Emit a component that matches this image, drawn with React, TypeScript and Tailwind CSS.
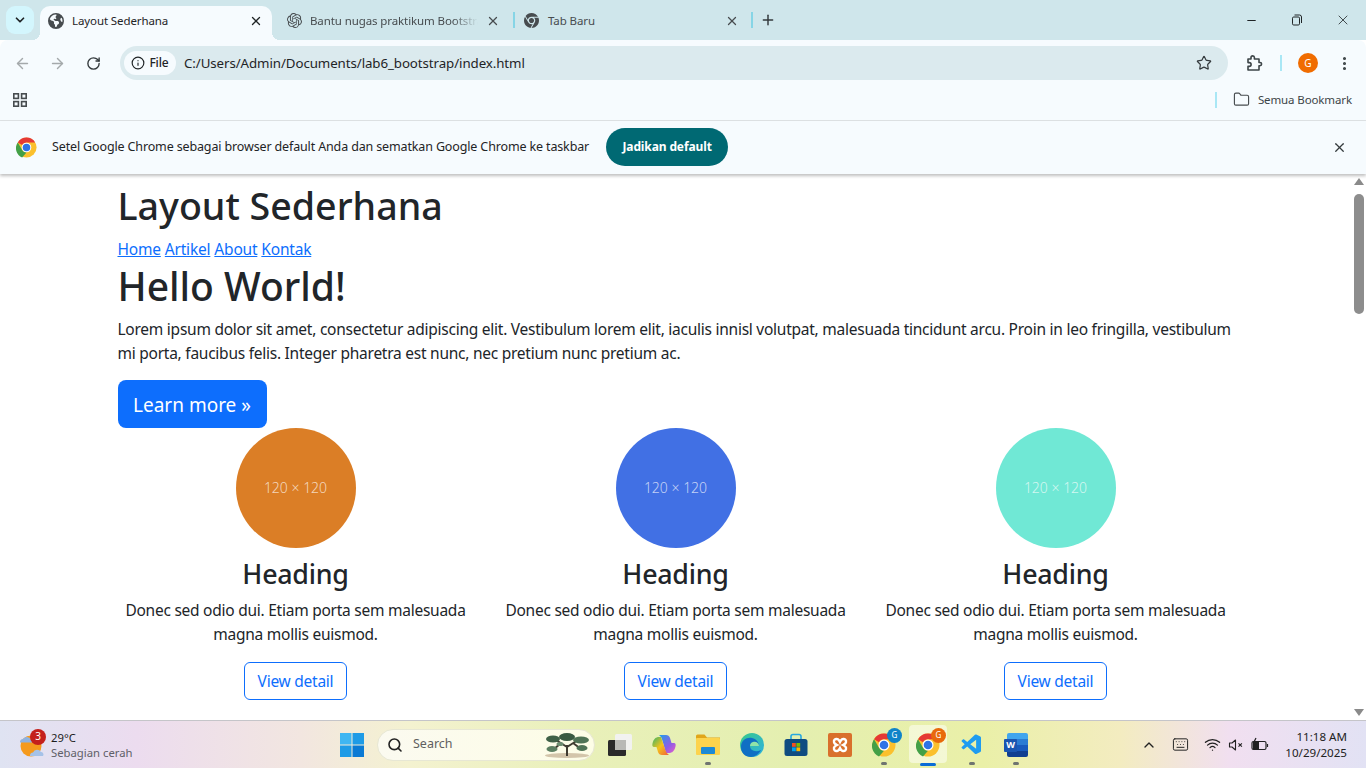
import { ArrowLeft, ArrowRight, ChevronDown, ChevronUp, Folder, Info, Keyboard, Minus, MoreVertical, Plus, RotateCw, Search, Star, Wifi, X } from "lucide-react";
import { FaChrome, FaEarthAmericas } from "react-icons/fa6";
import { SiOpenai } from "react-icons/si";
import { VscVscode } from "react-icons/vsc";

const links = ["Home", "Artikel", "About", "Kontak"];
const thumbs = ["bg-[#db7e26]", "bg-[#4170e4]", "bg-[#70e8d5]"];

function ChromeLogo({ size = 22 }: { size?: number }) {
    return (
        <svg width={size} height={size} viewBox="0 0 48 48">
            <circle cx="24" cy="24" r="23" fill="#fbc02d" />
            <path d="M24 1a23 23 0 0 1 19.9 11.5H24a11.5 11.5 0 0 0-10 5.8L4.1 12.5A23 23 0 0 1 24 1z" fill="#e53935" />
            <path d="M4.1 12.5 14 29.7a11.5 11.5 0 0 0 10 5.8L14 47A23 23 0 0 1 4.1 12.5z" fill="#43a047" />
            <circle cx="24" cy="24" r="11" fill="#fff" />
            <circle cx="24" cy="24" r="8.6" fill="#2f73e6" />
        </svg>
    );
}

function Card({ color }: { color: string }) {
    return (
        <div className="w-[380px] px-[12px] flex flex-col items-center text-center">
            <div className={`w-[120px] h-[120px] rounded-full ${color} flex items-center justify-center text-[14px] tracking-normal text-white/70 font-light`}>120 × 120</div>
            <h2 className="text-[26.8px] leading-[34px] font-medium mt-[9px] text-[#212529]">Heading</h2>
            <p className="leading-[24px] mt-[7px] w-full">Donec sed odio dui. Etiam porta sem malesuada magna mollis euismod.</p>
            <button className="mt-[16px] h-[38px] w-[103px] rounded-[6px] border border-[#0d6efd] text-[#0d6efd] text-[15.5px]">View detail</button>
        </div>
    );
}

function TaskIcon({ children, active, dot }: { children: React.ReactNode; active?: boolean; dot?: boolean }) {
    return (
        <div className="relative w-[44px] h-[47px] flex items-center justify-center">
            {active && <div className="absolute left-[3px] top-[4px] w-[38px] h-[38px] rounded-[4px] bg-white/50" />}
            <div className="relative">{children}</div>
            {dot && <div className="absolute bottom-[3px] left-[19px] w-[6px] h-[3px] rounded-full bg-[#6f7470]" />}
            {active && <div className="absolute bottom-[2px] left-[14px] w-[16px] h-[3px] rounded-full bg-[#0a6cd6]" />}
        </div>
    );
}

function ChromeBadge({ color }: { color: string }) {
    return (
        <div className="relative w-[24px] h-[24px]">
            <ChromeLogo size={24} />
            <div className={`absolute -top-[5px] -right-[6px] w-[15px] h-[15px] rounded-full ${color} text-white text-[8px] flex items-center justify-center`}>G</div>
        </div>
    );
}

export default function App() {
    return (
        <div className="w-[1366px] h-[768px] overflow-hidden flex flex-col bg-white font-['Noto_Sans',sans-serif] text-[#212529]">
            {/* tab strip */}
            <div className="h-[40px] bg-[#cfe6eb] flex items-end relative">
                <div className="absolute left-[6px] top-[6px] w-[28px] h-[28px] rounded-[9px] bg-[#d3f6fd] flex items-center justify-center">
                    <ChevronDown size={14} strokeWidth={3} className="text-[#1f2426]" />
                </div>
                <div className="ml-[40px] flex items-center h-[34px]">
                    <div className="relative h-[34px] w-[232px] bg-[#f6fbfe] rounded-t-[10px] flex items-center gap-[8px] pl-[8px] pr-[9px] pb-[5px] text-[#1f2426]">
                        <div className="absolute -left-[8px] bottom-0 w-[8px] h-[8px] bg-[radial-gradient(circle_at_0_0,transparent_8px,#f6fbfe_8px)]" />
                        <div className="absolute -right-[8px] bottom-0 w-[8px] h-[8px] bg-[radial-gradient(circle_at_100%_0,transparent_8px,#f6fbfe_8px)]" />
                        <FaEarthAmericas size={16} className="text-[#474c4f]" />
                        <span className="flex-1 text-[11.5px] tracking-[-0.1px] whitespace-nowrap">Layout Sederhana</span>
                        <X size={14} strokeWidth={2.2} />
                    </div>
                    <div className="w-[241px] h-[34px] flex items-center gap-[8px] pl-[15px] pr-[13px] pb-[5px] text-[#474c4f]">
                        <SiOpenai size={15} />
                        <span className="flex-1 text-[11.5px] tracking-[-0.1px] whitespace-nowrap overflow-hidden [mask-image:linear-gradient(to_right,black_85%,transparent)]">Bantu nugas praktikum Bootstrap</span>
                        <X size={14} strokeWidth={2.2} />
                    </div>
                    <div className="w-[2px] h-[16px] -mt-[6px] bg-[#86d5e6]" />
                    <div className="w-[236px] h-[34px] flex items-center gap-[9px] pl-[9px] pr-[12px] pb-[5px] text-[#474c4f]">
                        <FaChrome size={15} />
                        <span className="flex-1 text-[11.5px] tracking-[-0.1px] whitespace-nowrap">Tab Baru</span>
                        <X size={14} strokeWidth={2.2} />
                    </div>
                    <div className="w-[2px] h-[16px] -mt-[6px] bg-[#86d5e6]" />
                    <Plus size={16} strokeWidth={2.2} className="ml-[7px] -mt-[6px] text-[#343a3d]" />
                </div>
                <div className="ml-auto h-[40px] flex items-center text-[#1f2426]">
                    <div className="w-[46px] flex justify-center"><Minus size={13} /></div>
                    <div className="w-[46px] flex justify-center">
                        <svg width="12" height="12" viewBox="0 0 12 12" fill="none" stroke="currentColor"><rect x="1.5" y="3" width="7" height="8" rx="1.2" /><path d="M3.5 1h5a2 2 0 0 1 2 2v6" /></svg>
                    </div>
                    <div className="w-[46px] flex justify-center"><X size={16} strokeWidth={1.2} /></div>
                </div>
            </div>

            {/* toolbar */}
            <div className="h-[40px] pt-[6px] bg-[#f6fbfe] rounded-tr-[8px] rounded-tl-[8px] flex items-center text-[#474c4f]">
                <ArrowLeft size={17} className="ml-[14px] text-[#a4a9ab]" />
                <ArrowRight size={17} className="ml-[18px] text-[#a4a9ab]" />
                <RotateCw size={15} strokeWidth={2.2} className="ml-[20px] text-[#343a3d]" />
                <div className="ml-[19px] w-[1108px] h-[34px] rounded-full bg-[#dbeaee] flex items-center pl-[4px] pr-[16px]">
                    <div className="h-[24px] w-[52px] rounded-full bg-[#f6fbfe] flex items-center justify-center gap-[4px] text-[#1f2426]">
                        <Info size={14} />
                        <span className="text-[12px] font-medium tracking-[-0.01em]">File</span>
                    </div>
                    <span className="ml-[8px] mt-[1px] text-[13.3px] tracking-[-0.08px] text-[#1f2426]">C:/Users/Admin/Documents/lab6_bootstrap/index.html</span>
                    <Star size={16} strokeWidth={1.8} className="ml-auto text-[#343a3d]" />
                </div>
                <svg width="18" height="18" viewBox="0 0 18 18" fill="none" stroke="#3d4548" strokeWidth="1.6" className="ml-[17px]">
                    <path d="M3 5h3V3.6a1.7 1.7 0 0 1 3.4 0V5H14v3.5h1a1.6 1.6 0 0 1 0 3.2h-1V16H3v-3.6h1.2a1.9 1.9 0 0 0 0-3.8H3z" strokeLinejoin="round" />
                </svg>
                <div className="ml-[17px] w-[2px] h-[16px] bg-[#a9e7f5]" />
                <div className="ml-[16px] w-[20px] h-[20px] rounded-full bg-[#f06c00] text-white text-[10px] flex items-center justify-center">G</div>
                <MoreVertical size={17} strokeWidth={2.4} className="ml-[18px] text-[#3d4548]" />
            </div>

            {/* bookmark bar */}
            <div className="h-[41px] bg-[#f6fbfe] border-b border-[#dfe3e5] flex items-center pb-[1px]">
                <svg width="14" height="14" viewBox="0 0 14 14" fill="none" stroke="#474c4f" strokeWidth="1.6" className="ml-[13px]">
                    <rect x="0.8" y="0.8" width="4.6" height="4.6" /><rect x="8.6" y="0.8" width="4.6" height="4.6" /><rect x="0.8" y="8.6" width="4.6" height="4.6" /><rect x="8.6" y="8.6" width="4.6" height="4.6" />
                </svg>
                <div className="ml-auto w-[2px] h-[16px] bg-[#a9e7f5]" />
                <Folder size={17} strokeWidth={1.6} className="ml-[16px] text-[#474c4f]" />
                <span className="ml-[8px] mr-[14px] text-[11.5px] tracking-[-0.01em] text-[#3d4548]">Semua Bookmark</span>
            </div>

            {/* default browser bar */}
            <div className="h-[53px] pb-[1px] bg-[#f6fbfe] shadow-[0_2px_3px_rgba(0,0,0,0.25)] relative z-10 flex items-center">
                <div className="ml-[16px]"><ChromeLogo size={21} /></div>
                <span className="ml-[15px] mt-[1px] text-[12.5px] tracking-[-0.14px] text-[#1f2426]">Setel Google Chrome sebagai browser default Anda dan sematkan Google Chrome ke taskbar</span>
                <button className="ml-[17px] h-[38px] w-[122px] rounded-full bg-[#006973] text-white text-[12px] font-bold tracking-[-0.01em]">Jadikan default</button>
                <X size={15} strokeWidth={2} className="ml-auto mr-[19px] text-[#343a3d]" />
            </div>

            {/* page */}
            <div className="flex-1 flex min-h-0">
                <div className="flex-1 overflow-hidden">
                    <div className="w-[1140px] mx-auto px-[12px] text-[15.5px] tracking-[-0.25px] leading-[24px]">
                        <h1 className="text-[37.6px] tracking-normal leading-[48px] font-medium mt-[8px]">Layout Sederhana</h1>
                        <nav className="flex gap-[4px] mt-[7px] tracking-[-0.2px]">
                            {links.map((l) => (
                                <a key={l} href="#" className="text-[#0d6efd] underline">{l}</a>
                            ))}
                        </nav>
                        <h1 className="text-[39px] tracking-normal leading-[48px] font-medium mt-[1px]">Hello World!</h1>
                        <p className="mt-[7px]">Lorem ipsum dolor sit amet, consectetur adipiscing elit. Vestibulum lorem elit, iaculis innisl volutpat, malesuada tincidunt arcu. Proin in leo fringilla, vestibulum mi porta, faucibus felis. Integer pharetra est nunc, nec pretium nunc pretium ac.</p>
                        <button className="mt-[15px] h-[48px] w-[149px] pt-[2px] rounded-[8px] bg-[#0d6efd] text-white text-[19px] tracking-normal block">Learn more »</button>
                        <div className="flex -mx-[12px]">
                            {thumbs.map((c) => (
                                <Card key={c} color={c} />
                            ))}
                        </div>
                    </div>
                </div>
                <div className="w-[15px] bg-white flex flex-col items-center">
                    <div className="w-0 h-0 mt-[4px] border-x-[5px] border-x-transparent border-b-[7px] border-b-[#8a8a8a]" />
                    <div className="w-[10px] h-[120px] mt-[9px] rounded-full bg-[#8d8d8d]" />
                    <div className="w-0 h-0 mt-auto mb-[4px] border-x-[5px] border-x-transparent border-t-[7px] border-t-[#8a8a8a]" />
                </div>
            </div>

            {/* taskbar */}
            <div className="h-[48px] border-t border-[#c5c5c9] bg-[linear-gradient(90deg,#dfe3f2_0%,#ecdcef_10%,#f2e6e0_22%,#f4f2d0_30%,#e9f0ba_42%,#e4efb0_58%,#eaf0a8_72%,#f3ecc0_82%,#f1dff0_90%,#e2e2f4_100%)] flex items-center">
                <div className="w-[330px] shrink-0 flex items-center pl-[19px]">
                    <div className="relative w-[26px] h-[26px]">
                        <svg width="26" height="26" viewBox="0 0 26 26">
                            <circle cx="12" cy="14" r="10.500" fill="#f59a1d" />
                            <path d="M1 10.500a3 3 0 0 1 3-3.500 4.500 4.500 0 0 1 8 1 2.500 2.500 0 0 1 1 2.500z" fill="#8fb2e0" />
                            <path d="M11 24a3 3 0 0 1 3-3.500 4.500 4.500 0 0 1 8-.5 2.500 2.500 0 0 1 2 4z" fill="#a5c2e8" />
                        </svg>
                        <div className="absolute -top-[3px] left-[11px] w-[16px] h-[16px] rounded-full bg-[#c4201c] text-white text-[10px] flex items-center justify-center">3</div>
                    </div>
                    <div className="ml-[6px] leading-[15px]">
                        <div className="text-[11.3px] text-[#1c1c1c]">29°C</div>
                        <div className="text-[11.3px] text-[#5f5f68]">Sebagian cerah</div>
                    </div>
                </div>
                <div className="w-[44px] flex justify-center">
                    <svg width="24" height="24" viewBox="0 0 24 24">
                        <rect x="0" y="0" width="11.5" height="11.5" fill="#3fb6f2" />
                        <rect x="12.5" y="0" width="11.5" height="11.5" fill="#1e9be6" />
                        <rect x="0" y="12.5" width="11.5" height="11.5" fill="#1e9be6" />
                        <rect x="12.5" y="12.5" width="11.5" height="11.5" fill="#0a7ad4" />
                    </svg>
                </div>
                <div className="ml-[3px] w-[218px] h-[32px] rounded-full bg-[linear-gradient(90deg,#fbfaf0,#fdfde6)] border border-[#e7e7d4] flex items-center pl-[9px] pr-[4px] mr-[3px]">
                    <Search size={16} strokeWidth={2.4} className="text-[#222]" />
                    <span className="ml-[10px] text-[12.5px] text-[#5f5f5f]">Search</span>
                    <svg width="46" height="26" viewBox="0 0 46 26" className="ml-auto">
                        <ellipse cx="23" cy="23.500" rx="22" ry="2.500" fill="#d3c5aa" />
                        <path d="M23 24V13M23 15 12 8M23 15l11-7M17 11l-8 7M29 11l8 6" stroke="#3f3b30" strokeWidth="2" fill="none" />
                        <ellipse cx="9" cy="7" rx="7" ry="3.500" fill="#3f6147" />
                        <ellipse cx="23" cy="5" rx="8" ry="4" fill="#3a5a42" />
                        <ellipse cx="37" cy="8" rx="8" ry="3.500" fill="#4f7355" />
                        <ellipse cx="8" cy="17" rx="5.500" ry="3" fill="#5c7f61" />
                        <ellipse cx="38" cy="16" rx="5.500" ry="3" fill="#4f7355" />
                        <ellipse cx="16" cy="12" rx="3.500" ry="2" fill="#6d8d70" />
                    </svg>
                </div>
                <TaskIcon>
                    <svg width="24" height="24" viewBox="0 0 24 24">
                        <rect x="0" y="7" width="18" height="16" rx="1.5" fill="#2a2a2a" />
                        <rect x="7" y="1" width="17" height="16" rx="1.5" fill="#f2f2f0" />
                        <rect x="7" y="7" width="11" height="10" fill="#b9b9b6" />
                    </svg>
                </TaskIcon>
                <TaskIcon>
                    <svg width="24" height="24" viewBox="0 0 24 24">
                        <defs>
                            <linearGradient id="cpA" x1="0" y1="0" x2="1" y2="1"><stop offset="0" stopColor="#1f9fe8" /><stop offset="0.6" stopColor="#8f5ce6" /><stop offset="1" stopColor="#e85fc8" /></linearGradient>
                            <linearGradient id="cpB" x1="0" y1="0" x2="1" y2="1"><stop offset="0" stopColor="#35b56a" /><stop offset="0.5" stopColor="#f5c21a" /><stop offset="1" stopColor="#f0603c" /></linearGradient>
                        </defs>
                        <path d="M7 2h7c2 0 3.400 1 4 3l1.500 5H22c1.500 0 2 1.500 1.500 3.500C22.500 18 20 20 17 20h-3l-3.500-12C10 5 8.500 3 7 2z" fill="url(#cpA)" />
                        <path d="M17 22h-7c-2 0-3.400-1-4-3l-1.500-5H2c-1.500 0-2-1.500-1.500-3.500C1.500 6 4 4 7 4h2l4 12c.7 3 2.500 5 4 6z" fill="url(#cpB)" />
                    </svg>
                </TaskIcon>
                <TaskIcon dot>
                    <svg width="24" height="24" viewBox="0 0 24 24">
                        <path d="M0 3a1.500 1.500 0 0 1 1.500-1.500h7l2.500 3h13V21H0z" fill="#e0a61a" />
                        <rect x="0" y="5" width="24" height="17" rx="1" fill="#fcd34d" />
                        <rect x="5" y="14" width="14" height="7" rx="1" fill="#1c8ad6" />
                    </svg>
                </TaskIcon>
                <TaskIcon>
                    <svg width="24" height="24" viewBox="0 0 24 24">
                        <defs>
                            <linearGradient id="edgeA" x1="0" y1="0" x2="1" y2="1"><stop offset="0" stopColor="#37c98a" /><stop offset="1" stopColor="#2fb0e0" /></linearGradient>
                        </defs>
                        <circle cx="12" cy="12" r="12" fill="url(#edgeA)" />
                        <path d="M1 14C1 7 7 4 12 5c5 1 7 5 7 8h-9c0 4 5 7 11 4-2 4-6 7-10 7C5 24 1 20 1 14z" fill="#0f6fc4" />
                        <path d="M10 13h9c0-3-3-5-6-4-2 .6-3 2-3 4z" fill="#8fe3a8" />
                    </svg>
                </TaskIcon>
                <TaskIcon>
                    <svg width="24" height="24" viewBox="0 0 24 24">
                        <path d="M7 6V3.500A2 2 0 0 1 9 1.500h6a2 2 0 0 1 2 2V6" fill="none" stroke="#28a8e0" strokeWidth="1.6" />
                        <rect x="0.500" y="6" width="23" height="17" rx="2.500" fill="#0f4c81" />
                        <rect x="8" y="10" width="3.800" height="3.800" fill="#f25022" />
                        <rect x="12.400" y="10" width="3.800" height="3.800" fill="#7fba00" />
                        <rect x="8" y="14.400" width="3.800" height="3.800" fill="#00a4ef" />
                        <rect x="12.400" y="14.400" width="3.800" height="3.800" fill="#ffb900" />
                    </svg>
                </TaskIcon>
                <TaskIcon>
                    <div className="w-[24px] h-[24px] rounded-[2px] bg-[#d9702c] flex items-center justify-center">
                        <svg width="18" height="18" viewBox="0 0 18 18" fill="none" stroke="#fff" strokeWidth="2.400">
                            <path d="M6 3a2.500 2.500 0 0 0-3 3c0 1.500 2 2.500 3 3-1 .5-3 1.500-3 3a2.500 2.500 0 0 0 3 3c1.500 0 2.500-2 3-3 .5 1 1.500 3 3 3a2.500 2.500 0 0 0 3-3c0-1.500-2-2.500-3-3 1-.5 3-1.500 3-3a2.500 2.500 0 0 0-3-3c-1.500 0-2.500 2-3 3-.5-1-1.500-3-3-3z" />
                        </svg>
                    </div>
                </TaskIcon>
                <TaskIcon dot><ChromeBadge color="bg-[#0f83c9]" /></TaskIcon>
                <TaskIcon active><ChromeBadge color="bg-[#e8690b]" /></TaskIcon>
                <TaskIcon dot><VscVscode size={24} className="text-[#1f9cf0]" /></TaskIcon>
                <TaskIcon dot>
                    <div className="relative w-[24px] h-[24px]">
                        <div className="absolute left-[3px] top-0 w-[21px] h-[24px] rounded-[2px] bg-[linear-gradient(180deg,#41a5ee_0%,#41a5ee_25%,#2b7cd3_25%,#2b7cd3_50%,#185abd_50%,#185abd_75%,#103f91_75%)]" />
                        <div className="absolute left-0 top-[6px] w-[13px] h-[13px] rounded-[1px] bg-[#1a55b0] text-white text-[9px] font-bold flex items-center justify-center">W</div>
                    </div>
                </TaskIcon>

                <div className="ml-auto flex items-center text-[#222]">
                    <ChevronUp size={16} strokeWidth={2} />
                    <Keyboard size={17} strokeWidth={1.4} className="ml-[15px]" />
                    <Wifi size={17} strokeWidth={1.8} className="ml-[15px]" />
                    <svg width="16" height="16" viewBox="0 0 16 16" fill="none" stroke="currentColor" strokeWidth="1.100" className="ml-[7px]">
                        <path d="M1.500 6v4h2.500l3.500 3V3L4 6z" strokeLinejoin="round" />
                        <path d="M10.500 6.300l3.400 3.400M13.900 6.300l-3.400 3.400" />
                    </svg>
                    <svg width="18" height="16" viewBox="0 0 18 16" fill="none" stroke="currentColor" strokeWidth="1.200" className="ml-[7px]">
                        <rect x="1" y="4.500" width="14" height="8" rx="1.500" />
                        <path d="M16.500 7v3" />
                        <path d="M2 5h6v7H2z" fill="currentColor" stroke="none" />
                        <path d="M5 1 3 5h3L4 8" />
                    </svg>
                    <div className="ml-[16px] mr-[19px] text-right text-[11.6px] leading-[16px] text-[#222]">
                        <div>11:18 AM</div>
                        <div>10/29/2025</div>
                    </div>
                </div>
            </div>
        </div>
    );
}
